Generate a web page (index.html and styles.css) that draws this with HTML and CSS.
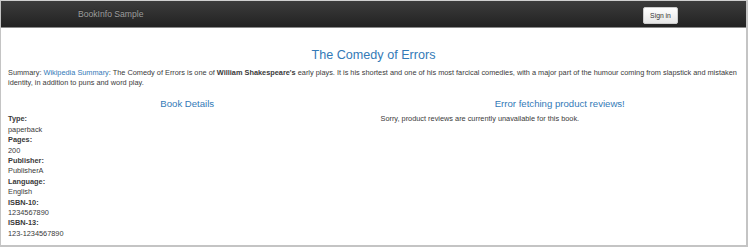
FILE: index.html
```html
<!DOCTYPE html>
<html lang="en">
<head>
    <meta charset="UTF-8">
    <meta name="viewport" content="width=device-width, initial-scale=1.0">
    <title>Simple Bookstore App</title>
    <link rel="stylesheet" href="styles.css">
</head>
<body>
    <div class="frame">
        <nav class="navbar">
            <div class="navbar-inner">
                <a class="brand" href="#">BookInfo Sample</a>
                <button class="btn-signin">Sign in</button>
            </div>
        </nav>

        <div class="container">
            <h3 class="title">The Comedy of Errors</h3>
            <p class="summary">Summary: <a href="#">Wikipedia Summary</a>: The Comedy of Errors is one of <b>William Shakespeare's</b> early plays. It is his shortest and one of his most farcical comedies, with a major part of the humour coming from slapstick and mistaken identity, in addition to puns and word play.</p>

            <div class="row">
                <div class="col">
                    <h4 class="heading">Book Details</h4>
                    <dl class="details">
                        <dt>Type:</dt><dd>paperback</dd>
                        <dt>Pages:</dt><dd>200</dd>
                        <dt>Publisher:</dt><dd>PublisherA</dd>
                        <dt>Language:</dt><dd>English</dd>
                        <dt>ISBN-10:</dt><dd>1234567890</dd>
                        <dt>ISBN-13:</dt><dd>123-1234567890</dd>
                    </dl>
                </div>
                <div class="col">
                    <h4 class="heading">Error fetching product reviews!</h4>
                    <p>Sorry, product reviews are currently unavailable for this book.</p>
                </div>
            </div>
        </div>
    </div>
</body>
</html>
```

FILE: styles.css
```css
body {
    margin: 0;
    font-family: "Liberation Sans", Arial, sans-serif;
    font-size: 7.35px;
    line-height: 10.4px;
    color: #3a3a3a;
}

.frame {
    box-sizing: border-box;
    width: 748px;
    height: 247px;
    border-top: 1px solid #cfcfcf;
    border-left: 1px solid #c4c4c4;
    border-right: 2px solid #c4c4c4;
    border-bottom: 2px solid #c4c4c4;
    overflow: hidden;
    background-color: white;
}

.navbar {
    box-sizing: border-box;
    height: 27px;
    background-image: linear-gradient(#3c3c3c, #222);
    border-bottom: 1px solid #8a8a8a;
}

.navbar-inner {
    display: flex;
    align-items: center;
    justify-content: space-between;
    height: 100%;
    padding: 0 68px 0 77px;
}

.brand {
    color: #9d9d9d;
    font-size: 8.6px;
    text-decoration: none;
    text-shadow: 0 -1px 0 rgba(0, 0, 0, 0.25);
}

.btn-signin {
    box-sizing: border-box;
    width: 35px;
    height: 17px;
    padding: 0;
    margin-top: 2px;
    font-family: "Liberation Sans", Arial, sans-serif;
    font-size: 6.8px;
    color: #333;
    background-image: linear-gradient(#fff, #e6e6e6);
    border: 1px solid #ccc;
    border-radius: 2px;
}

.container {
    padding: 10.4px 7px 0;
}

a {
    color: #337ab7;
    text-decoration: none;
}

.title {
    margin: 10.4px 0 5.2px;
    font-size: 12.6px;
    line-height: 13.7px;
    font-weight: normal;
    text-align: center;
    color: #337ab7;
}

p {
    margin: 0 0 5.2px;
}

.row {
    display: grid;
    grid-template-columns: 1fr 1fr;
    margin: 0 -7px;
}

.col {
    padding: 0 7px;
}

.heading {
    margin: 5.2px 0;
    font-size: 9.6px;
    line-height: 10.3px;
    font-weight: normal;
    text-align: center;
    color: #337ab7;
}

.details {
    margin: 0;
}

.details dt {
    font-weight: bold;
}

.details dd {
    margin: 0;
}
```
